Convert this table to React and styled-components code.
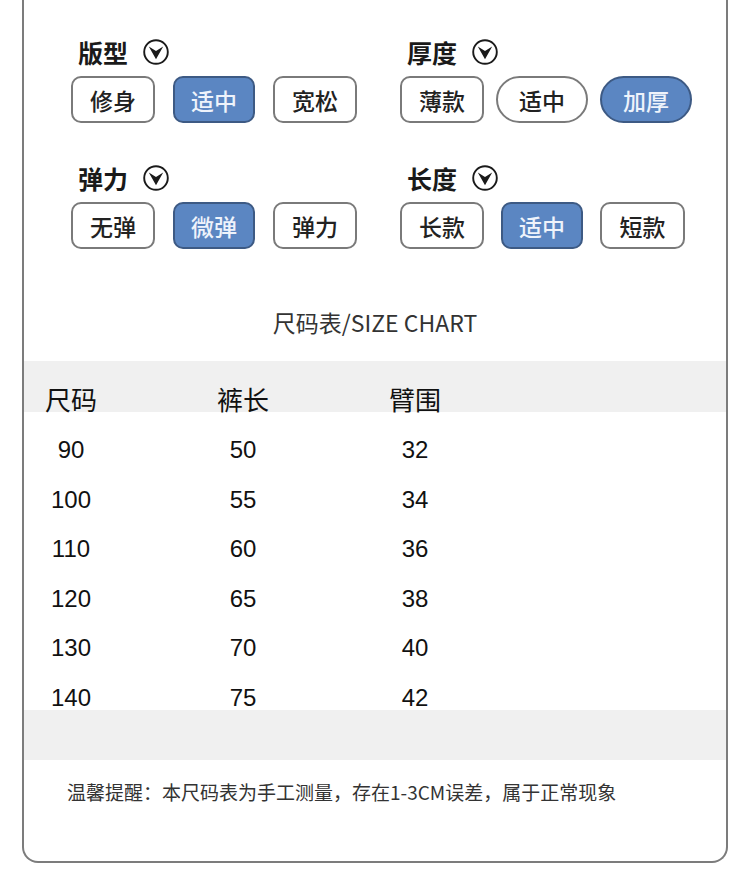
import styled, { createGlobalStyle } from "styled-components";

const GlobalStyle = createGlobalStyle`
  body {
    margin: 0;
    background: #fff;
    font-family: "Noto Sans CJK SC", "Noto Sans", sans-serif;
    color: #222;
  }
`;

const Page = styled.div`
  width: 750px;
  padding: 0 22px 25px 22px;
  box-sizing: border-box;
`;

const Card = styled.article`
  border: 2px solid #7c7c7c;
  border-top: none;
  border-radius: 0 0 16px 16px;
  padding-bottom: 56px;
`;

const Options = styled.section`
  display: grid;
  grid-template-columns: 329px 1fr;
  row-gap: 41px;
  padding: 38px 0 0 47px;
`;

const Group = styled.div`
  display: flex;
  flex-direction: column;
  gap: 10px;
`;

const GroupTitle = styled.h3`
  margin: 0 0 0 7px;
  height: 28px;
  display: flex;
  align-items: center;
  gap: 15px;
  font-size: 25px;
  font-weight: 700;
  color: #1a1a1a;
  line-height: 28px;
`;

const Choices = styled.div`
  display: flex;
  gap: ${(p) => p.$gap}px;
`;

const Choice = styled.div`
  width: ${(p) => p.$w || 84}px;
  height: 47px;
  box-sizing: border-box;
  display: flex;
  align-items: center;
  justify-content: center;
  border: 2px solid ${(p) => (p.$on ? "#3d5a84" : "#7a7a7a")};
  border-radius: ${(p) => (p.$pill ? "24px" : "10px")};
  background: ${(p) => (p.$on ? "#5b86c2" : "#fff")};
  color: ${(p) => (p.$on ? "#eef3fb" : "#222")};
  font-size: 23px;
  font-weight: 500;
`;

const ChartTitle = styled.h2`
  margin: 58px 0 0;
  text-align: center;
  font-size: 23px;
  line-height: 30px;
  font-weight: 400;
  color: #333;
`;

const HeadBand = styled.div`
  margin-top: 24px;
  height: 51px;
  background: #f0f0f0;
  display: grid;
  grid-template-columns: repeat(3, 90px);
  column-gap: 82px;
  padding-left: 2px;
  align-items: end;
`;

const HeadCell = styled.div`
  text-align: center;
  font-size: 26px;
  line-height: 26px;
  color: #111;
`;

const Row = styled.div`
  height: 49.6px;
  box-sizing: border-box;
  padding-top: 27px;
  display: grid;
  grid-template-columns: repeat(3, 90px);
  column-gap: 82px;
  padding-left: 2px;
`;

const Cell = styled.div`
  text-align: center;
  font-family: "Liberation Sans", Arial, sans-serif;
  font-size: 24px;
  line-height: 22px;
  color: #111;
`;

const FootBand = styled.div`
  height: 50px;
  background: #f0f0f0;
`;

const Note = styled.p`
  margin: 19px 0 0 43px;
  font-size: 19px;
  line-height: 26px;
  color: #333;
`;

function Chevron() {
  return (
    <svg width="26" height="26" viewBox="0 0 26 26">
      <circle cx="13" cy="13" r="11.8" fill="none" stroke="#1a1a1a" strokeWidth="1.9" />
      <polygon points="5.8,7.6 13,12 20.2,7.6 13,20.2" fill="#1a1a1a" />
    </svg>
  );
}

const groups = [
  { title: "版型", gap: 18, items: [{ t: "修身" }, { t: "适中", w: 82, on: true }, { t: "宽松" }] },
  {
    title: "厚度",
    gap: 12,
    items: [{ t: "薄款", w: 84 }, { t: "适中", w: 92, pill: true }, { t: "加厚", w: 92, pill: true, on: true }],
  },
  { title: "弹力", gap: 18, items: [{ t: "无弹" }, { t: "微弹", w: 82, on: true }, { t: "弹力" }] },
  { title: "长度", gap: 17, items: [{ t: "长款" }, { t: "适中", w: 82, on: true }, { t: "短款", w: 85 }] },
];

const sizes = [
  ["90", "50", "32"],
  ["100", "55", "34"],
  ["110", "60", "36"],
  ["120", "65", "38"],
  ["130", "70", "40"],
  ["140", "75", "42"],
];

export default function App() {
  return (
    <>
      <GlobalStyle />
      <Page>
        <Card>
          <Options>
            {groups.map((g) => (
              <Group key={g.title}>
                <GroupTitle>
                  {g.title}
                  <Chevron />
                </GroupTitle>
                <Choices $gap={g.gap}>
                  {g.items.map((it, i) => (
                    <Choice key={i} $w={it.w} $on={it.on} $pill={it.pill}>
                      {it.t}
                    </Choice>
                  ))}
                </Choices>
              </Group>
            ))}
          </Options>

          <ChartTitle>尺码表/SIZE CHART</ChartTitle>
          <HeadBand>
            <HeadCell>尺码</HeadCell>
            <HeadCell>裤长</HeadCell>
            <HeadCell>臂围</HeadCell>
          </HeadBand>
          {sizes.map((r) => (
            <Row key={r[0]}>
              {r.map((v, i) => (
                <Cell key={i}>{v}</Cell>
              ))}
            </Row>
          ))}
          <FootBand />
          <Note>温馨提醒：本尺码表为手工测量，存在1-3CM误差，属于正常现象</Note>
        </Card>
      </Page>
    </>
  );
}
